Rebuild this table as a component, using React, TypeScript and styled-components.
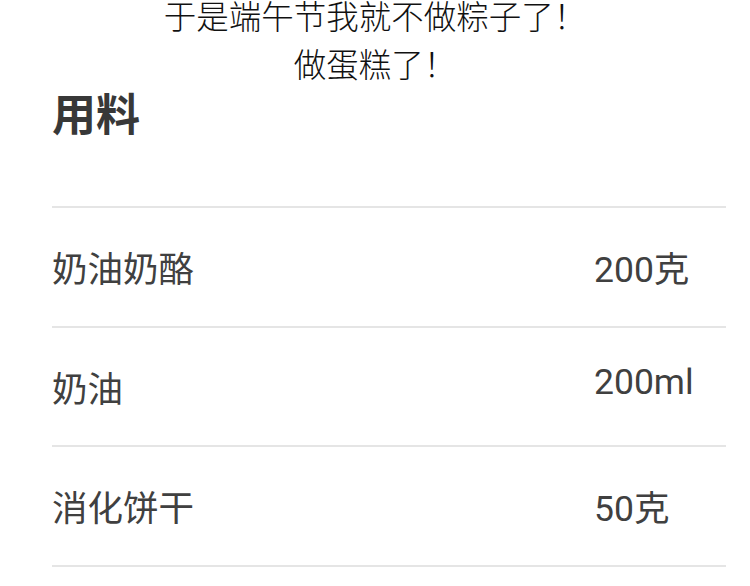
import React from "react";
import styled, { createGlobalStyle } from "styled-components";

const Global = createGlobalStyle`
  html, body { margin: 0; padding: 0; background: #ffffff; }
  body { font-family: Roboto, "Noto Sans CJK SC", sans-serif; overflow: hidden; }
`;

const Page = styled.div`
  width: 750px;
  height: 586px;
  overflow: hidden;
  box-sizing: border-box;
  padding: 0 24px 0 52px;
`;

const Intro = styled.div`
  margin: -9px 0 0 -52px;
  width: 750px;
  text-align: center;
  font-family: "Noto Sans CJK SC", sans-serif;
  font-weight: 300;
  font-size: 32.5px;
  line-height: 48px;
  color: #111;
`;

const Title = styled.h2`
  margin: -3px 0 66px 0;
  font-family: "Noto Sans CJK SC", sans-serif;
  font-weight: 700;
  font-size: 44px;
  line-height: 56px;
  color: #383838;
`;

const List = styled.div`
  border-top: 2px solid #e5e5e5;
`;

const Row = styled.div`
  display: grid;
  grid-template-columns: 542px 1fr;
  align-items: start;
  height: 117.5px;
  border-bottom: 2px solid #e5e5e5;
`;

const Cell = styled.div`
  padding-top: 33px;
  font-family: Roboto, "Noto Sans CJK SC", sans-serif;
  font-size: 35.5px;
  color: #404040;
`;

const items = [
  { name: "奶油奶酪", qty: "200克" },
  { name: "奶油", qty: "200ml" },
  { name: "消化饼干", qty: "50克" },
];

export default function App() {
  return (
    <>
      <Global />
      <Page>
        <Intro>
          于是端午节我就不做粽子了！
          <br />
          做蛋糕了！
        </Intro>
        <Title>用料</Title>
        <List>
          {items.map((it) => (
            <Row key={it.name}>
              <Cell>{it.name}</Cell>
              <Cell>{it.qty}</Cell>
            </Row>
          ))}
        </List>
      </Page>
    </>
  );
}
